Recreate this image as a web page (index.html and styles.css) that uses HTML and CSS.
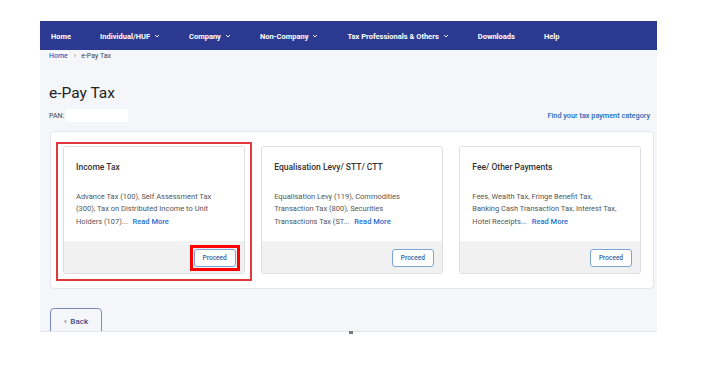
FILE: index.html
```html
<!DOCTYPE html>
<html lang="en">

<head>
    <meta charset="UTF-8">
    <meta name="viewport" content="width=device-width, initial-scale=1.0">
    <title>e-Pay Tax</title>
    <link rel="stylesheet" href="styles.css">
</head>

<body>
    <div class="frame">
        <!-- top menu -->
        <nav class="nav">
            <a class="nav-item">Home</a>
            <a class="nav-item">Individual/HUF
                <svg class="caret" viewBox="0 0 6 4"><path d="M1 1l2 2 2-2" /></svg></a>
            <a class="nav-item">Company
                <svg class="caret" viewBox="0 0 6 4"><path d="M1 1l2 2 2-2" /></svg></a>
            <a class="nav-item">Non-Company
                <svg class="caret" viewBox="0 0 6 4"><path d="M1 1l2 2 2-2" /></svg></a>
            <a class="nav-item">Tax Professionals &amp; Others
                <svg class="caret" viewBox="0 0 6 4"><path d="M1 1l2 2 2-2" /></svg></a>
            <a class="nav-item">Downloads</a>
            <a class="nav-item">Help</a>
        </nav>

        <div class="page">
            <div class="breadcrumb">
                <a class="crumb-link">Home</a>
                <span class="crumb-sep">&rsaquo;</span>
                <span>e-Pay Tax</span>
            </div>

            <h1 class="page-title">e-Pay Tax</h1>

            <div class="pan-row">
                <div class="pan">PAN: <span class="pan-value"></span></div>
                <a class="find-link">Find your tax payment category</a>
            </div>

            <!-- payment categories -->
            <section class="panel">
                <div class="card card-selected">
                    <div class="card-body">
                        <h3 class="card-title">Income Tax</h3>
                        <p class="card-text">Advance Tax (100), Self Assessment Tax (300), Tax on Distributed Income to Unit
                            <span>Holders (107)...</span> <a class="read-more">Read More</a></p>
                    </div>
                    <div class="card-footer">
                        <button class="btn-proceed btn-marked">Proceed</button>
                    </div>
                </div>
                <div class="card">
                    <div class="card-body">
                        <h3 class="card-title">Equalisation Levy/ STT/ CTT</h3>
                        <p class="card-text">Equalisation Levy (119), Commodities Transaction Tax (800), Securities
                            <span>Transactions Tax (ST...</span> <a class="read-more">Read More</a></p>
                    </div>
                    <div class="card-footer">
                        <button class="btn-proceed">Proceed</button>
                    </div>
                </div>
                <div class="card">
                    <div class="card-body">
                        <h3 class="card-title">Fee/ Other Payments</h3>
                        <p class="card-text">Fees, Wealth Tax, Fringe Benefit Tax, Banking Cash Transaction Tax, Interest Tax,
                            <span>Hotel Receipts...</span> <a class="read-more">Read More</a></p>
                    </div>
                    <div class="card-footer">
                        <button class="btn-proceed">Proceed</button>
                    </div>
                </div>
            </section>

            <button class="btn-back">&lsaquo;&nbsp; Back</button>
        </div>
    </div>
    <span class="scroll-mark"></span>
</body>

</html>
```

FILE: styles.css
```css
/* base */
body {
    margin: 0;
    padding: 0;
    font-family: Roboto, "Liberation Sans", Arial, sans-serif;
    background-color: #fff;
    color: #333;
}

h1,
h3,
p {
    margin: 0;
    padding: 0;
}

a {
    cursor: pointer;
}

.frame {
    margin: 21px 0 0 40px;
    width: 617px;
    height: 311px;
    overflow: hidden;
    background-color: #f5f6fa;
    border-bottom: 1px solid #e2e3e6;
    box-sizing: border-box;
}

/* top menu */
.nav {
    height: 29px;
    display: flex;
    align-items: center;
    gap: 29px;
    padding-left: 11px;
    background-color: #2b3990;
}

.nav-item {
    display: flex;
    align-items: center;
    gap: 4px;
    padding-top: 1px;
    font-size: 7.5px;
    font-weight: 700;
    color: #fff;
    white-space: nowrap;
}

.caret {
    width: 6px;
    height: 4px;
    fill: none;
    stroke: #fff;
    stroke-width: 0.9;
}

/* page */
.page {
    padding: 0 3px 0 9px;
}

.breadcrumb {
    display: flex;
    align-items: center;
    gap: 5px;
    height: 9px;
    padding-top: 1px;
    font-size: 7px;
    line-height: 8px;
    color: #444;
}

.crumb-link {
    color: #1f5fbf;
    font-weight: 500;
    background-color: #fff;
    padding: 0 1px;
    margin-left: -1px;
}

.crumb-sep {
    color: #888;
    font-size: 8px;
}

.page-title {
    margin-top: 23px;
    font-size: 15.5px;
    line-height: 20px;
    font-weight: 400;
    color: #222;
}

.pan-row {
    display: flex;
    align-items: center;
    justify-content: space-between;
    margin-top: 6px;
    padding-right: 4px;
    height: 13px;
}

.pan {
    display: flex;
    align-items: center;
    font-size: 7px;
    color: #444;
}

.pan-value {
    display: inline-block;
    width: 62px;
    height: 13px;
    margin-left: 2px;
    background-color: #fff;
}

.find-link {
    font-size: 7.3px;
    font-weight: 500;
    color: #2a6ab8;
}

/* categories */
.panel {
    display: grid;
    grid-template-columns: repeat(3, 1fr);
    gap: 16.5px;
    margin: 9px 0 0 1px;
    padding: 14px 12px;
    background-color: #fff;
    border: 1px solid #e4e6ec;
    border-radius: 4px;
}

.card {
    position: relative;
    display: flex;
    flex-direction: column;
    border: 1px solid #dedfe2;
    border-radius: 3px;
}

.card-selected::after {
    content: "";
    position: absolute;
    top: -5px;
    left: -8px;
    right: -8px;
    bottom: -8px;
    border: 2px solid #e1383f;
}

.card-body {
    height: 94px;
    box-sizing: border-box;
    padding: 15px 12px 0 12px;
    background-color: #fff;
    border-radius: 3px 3px 0 0;
}

.card-title {
    font-size: 8.5px;
    line-height: 10px;
    font-weight: 500;
    color: #333;
}

.card-text {
    max-width: 146px;
    margin-top: 19px;
    font-size: 7.5px;
    line-height: 12.3px;
    color: #555;
}

.read-more {
    margin-left: 3px;
    font-weight: 500;
    color: #1e6fd0;
}

.card-footer {
    height: 32px;
    display: flex;
    align-items: center;
    justify-content: flex-end;
    padding-right: 8px;
    background-color: #f1f1f2;
    border-radius: 0 0 3px 3px;
}

.btn-proceed {
    position: relative;
    width: 42px;
    height: 18px;
    margin-top: 1px;
    padding: 0;
    font-family: inherit;
    font-size: 6.5px;
    font-weight: 500;
    color: #3c5d9c;
    background-color: #fff;
    border: 1px solid #7aa3d6;
    border-radius: 3px;
}

/* red mark round the chosen button */
.btn-marked::after {
    content: "";
    position: absolute;
    top: -5px;
    left: -5px;
    right: -5px;
    bottom: -5px;
    border: 3px solid #f00;
}

.btn-back {
    display: flex;
    align-items: center;
    justify-content: center;
    width: 52px;
    height: 30px;
    margin: 19px 0 0 1px;
    padding: 0 0 4px 0;
    font-family: inherit;
    font-size: 8px;
    font-weight: 500;
    color: #3f4c8c;
    background-color: transparent;
    border: 1px solid #7f88bb;
    border-radius: 4px;
}

.scroll-mark {
    position: absolute;
    left: 349px;
    top: 331px;
    width: 4px;
    height: 3px;
    background-color: #777;
}
```
